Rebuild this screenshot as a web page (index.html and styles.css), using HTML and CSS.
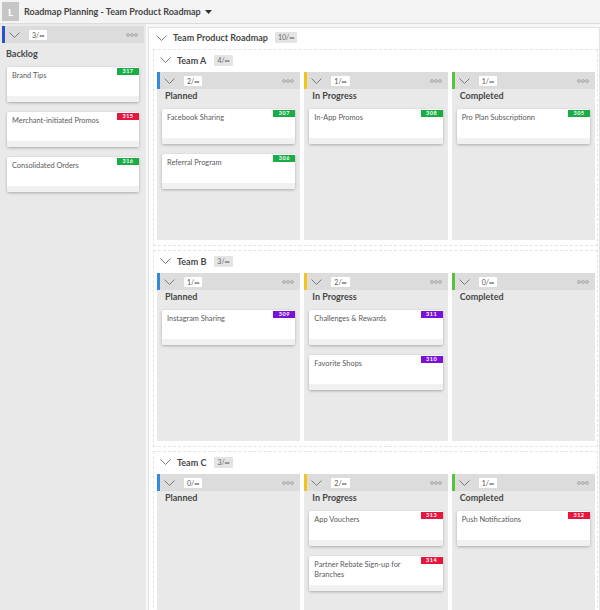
FILE: index.html
```html
<!DOCTYPE html>
<html>
<head>
<meta charset="utf-8">
<link rel="stylesheet" href="styles.css">
</head>
<body>
<header class="topbar">
  <div class="avatar">L</div>
  <div class="title">Roadmap Planning - Team Product Roadmap</div>
  <svg class="caret" width="7" height="4" viewBox="0 0 7 4"><polygon points="0,0 7,0 3.5,4" fill="#333"/></svg>
</header>
<div class="app">
  <aside class="backlog">
    <div class="colhead bar-navy">
      <svg class="chev" width="11" height="6" viewBox="0 0 11 6"><polyline points="0.5,0.5 5.5,5.5 10.5,0.5"/></svg>
      <span class="cbadge">3/∞</span>
      <svg class="dots" width="12" height="4" viewBox="0 0 12 4"><circle cx="2" cy="2" r="1.4"/><circle cx="6" cy="2" r="1.4"/><circle cx="10" cy="2" r="1.4"/></svg>
    </div>
    <div class="collabel">Backlog</div>
    <div class="cards">
      <div class="card"><div class="card-body">Brand Tips</div><div class="card-foot"></div><span class="num green">317</span></div>
      <div class="card"><div class="card-body">Merchant-initiated Promos</div><div class="card-foot"></div><span class="num red">315</span></div>
      <div class="card"><div class="card-body">Consolidated Orders</div><div class="card-foot"></div><span class="num green">316</span></div>
    </div>
  </aside>
  <main class="main">
    <section class="roadmap">
      <div class="rm-head">
        <svg class="chev" width="11" height="6" viewBox="0 0 11 6"><polyline points="0.5,0.5 5.5,5.5 10.5,0.5"/></svg>
        <span class="rm-title">Team Product Roadmap</span>
        <span class="tbadge">10/∞</span>
      </div>

      <section class="team">
        <div class="team-head">
          <svg class="chev" width="11" height="6" viewBox="0 0 11 6"><polyline points="0.5,0.5 5.5,5.5 10.5,0.5"/></svg>
          <span class="team-title">Team A</span>
          <span class="tbadge">4/∞</span>
        </div>
        <div class="cols">
          <div class="col">
            <div class="colhead bar-blue">
              <svg class="chev" width="11" height="6" viewBox="0 0 11 6"><polyline points="0.5,0.5 5.5,5.5 10.5,0.5"/></svg>
              <span class="cbadge">2/∞</span>
              <svg class="dots" width="12" height="4" viewBox="0 0 12 4"><circle cx="2" cy="2" r="1.4"/><circle cx="6" cy="2" r="1.4"/><circle cx="10" cy="2" r="1.4"/></svg>
            </div>
            <div class="collabel">Planned</div>
            <div class="cards">
              <div class="card"><div class="card-body">Facebook Sharing</div><div class="card-foot"></div><span class="num green">307</span></div>
              <div class="card"><div class="card-body">Referral Program</div><div class="card-foot"></div><span class="num green">306</span></div>
            </div>
          </div>
          <div class="col">
            <div class="colhead bar-yellow">
              <svg class="chev" width="11" height="6" viewBox="0 0 11 6"><polyline points="0.5,0.5 5.5,5.5 10.5,0.5"/></svg>
              <span class="cbadge">1/∞</span>
              <svg class="dots" width="12" height="4" viewBox="0 0 12 4"><circle cx="2" cy="2" r="1.4"/><circle cx="6" cy="2" r="1.4"/><circle cx="10" cy="2" r="1.4"/></svg>
            </div>
            <div class="collabel">In Progress</div>
            <div class="cards">
              <div class="card"><div class="card-body">In-App Promos</div><div class="card-foot"></div><span class="num green">308</span></div>
            </div>
          </div>
          <div class="col">
            <div class="colhead bar-green">
              <svg class="chev" width="11" height="6" viewBox="0 0 11 6"><polyline points="0.5,0.5 5.5,5.5 10.5,0.5"/></svg>
              <span class="cbadge">1/∞</span>
              <svg class="dots" width="12" height="4" viewBox="0 0 12 4"><circle cx="2" cy="2" r="1.4"/><circle cx="6" cy="2" r="1.4"/><circle cx="10" cy="2" r="1.4"/></svg>
            </div>
            <div class="collabel">Completed</div>
            <div class="cards">
              <div class="card"><div class="card-body">Pro Plan Subscriptionn</div><div class="card-foot"></div><span class="num green">305</span></div>
            </div>
          </div>
        </div>
      </section>

      <section class="team">
        <div class="team-head">
          <svg class="chev" width="11" height="6" viewBox="0 0 11 6"><polyline points="0.5,0.5 5.5,5.5 10.5,0.5"/></svg>
          <span class="team-title">Team B</span>
          <span class="tbadge">3/∞</span>
        </div>
        <div class="cols">
          <div class="col">
            <div class="colhead bar-blue">
              <svg class="chev" width="11" height="6" viewBox="0 0 11 6"><polyline points="0.5,0.5 5.5,5.5 10.5,0.5"/></svg>
              <span class="cbadge">1/∞</span>
              <svg class="dots" width="12" height="4" viewBox="0 0 12 4"><circle cx="2" cy="2" r="1.4"/><circle cx="6" cy="2" r="1.4"/><circle cx="10" cy="2" r="1.4"/></svg>
            </div>
            <div class="collabel">Planned</div>
            <div class="cards">
              <div class="card"><div class="card-body">Instagram Sharing</div><div class="card-foot"></div><span class="num purple">309</span></div>
            </div>
          </div>
          <div class="col">
            <div class="colhead bar-yellow">
              <svg class="chev" width="11" height="6" viewBox="0 0 11 6"><polyline points="0.5,0.5 5.5,5.5 10.5,0.5"/></svg>
              <span class="cbadge">2/∞</span>
              <svg class="dots" width="12" height="4" viewBox="0 0 12 4"><circle cx="2" cy="2" r="1.4"/><circle cx="6" cy="2" r="1.4"/><circle cx="10" cy="2" r="1.4"/></svg>
            </div>
            <div class="collabel">In Progress</div>
            <div class="cards">
              <div class="card"><div class="card-body">Challenges &amp; Rewards</div><div class="card-foot"></div><span class="num purple">311</span></div>
              <div class="card"><div class="card-body">Favorite Shops</div><div class="card-foot"></div><span class="num purple">310</span></div>
            </div>
          </div>
          <div class="col">
            <div class="colhead bar-green">
              <svg class="chev" width="11" height="6" viewBox="0 0 11 6"><polyline points="0.5,0.5 5.5,5.5 10.5,0.5"/></svg>
              <span class="cbadge">0/∞</span>
              <svg class="dots" width="12" height="4" viewBox="0 0 12 4"><circle cx="2" cy="2" r="1.4"/><circle cx="6" cy="2" r="1.4"/><circle cx="10" cy="2" r="1.4"/></svg>
            </div>
            <div class="collabel">Completed</div>
            <div class="cards"></div>
          </div>
        </div>
      </section>

      <section class="team">
        <div class="team-head">
          <svg class="chev" width="11" height="6" viewBox="0 0 11 6"><polyline points="0.5,0.5 5.5,5.5 10.5,0.5"/></svg>
          <span class="team-title">Team C</span>
          <span class="tbadge">3/∞</span>
        </div>
        <div class="cols">
          <div class="col">
            <div class="colhead bar-blue">
              <svg class="chev" width="11" height="6" viewBox="0 0 11 6"><polyline points="0.5,0.5 5.5,5.5 10.5,0.5"/></svg>
              <span class="cbadge">0/∞</span>
              <svg class="dots" width="12" height="4" viewBox="0 0 12 4"><circle cx="2" cy="2" r="1.4"/><circle cx="6" cy="2" r="1.4"/><circle cx="10" cy="2" r="1.4"/></svg>
            </div>
            <div class="collabel">Planned</div>
            <div class="cards"></div>
          </div>
          <div class="col">
            <div class="colhead bar-yellow">
              <svg class="chev" width="11" height="6" viewBox="0 0 11 6"><polyline points="0.5,0.5 5.5,5.5 10.5,0.5"/></svg>
              <span class="cbadge">2/∞</span>
              <svg class="dots" width="12" height="4" viewBox="0 0 12 4"><circle cx="2" cy="2" r="1.4"/><circle cx="6" cy="2" r="1.4"/><circle cx="10" cy="2" r="1.4"/></svg>
            </div>
            <div class="collabel">In Progress</div>
            <div class="cards">
              <div class="card"><div class="card-body">App Vouchers</div><div class="card-foot"></div><span class="num red">313</span></div>
              <div class="card"><div class="card-body">Partner Rebate Sign-up for Branches</div><div class="card-foot"></div><span class="num red">314</span></div>
            </div>
          </div>
          <div class="col">
            <div class="colhead bar-green">
              <svg class="chev" width="11" height="6" viewBox="0 0 11 6"><polyline points="0.5,0.5 5.5,5.5 10.5,0.5"/></svg>
              <span class="cbadge">1/∞</span>
              <svg class="dots" width="12" height="4" viewBox="0 0 12 4"><circle cx="2" cy="2" r="1.4"/><circle cx="6" cy="2" r="1.4"/><circle cx="10" cy="2" r="1.4"/></svg>
            </div>
            <div class="collabel">Completed</div>
            <div class="cards">
              <div class="card"><div class="card-body">Push Notifications</div><div class="card-foot"></div><span class="num red">312</span></div>
            </div>
          </div>
        </div>
      </section>
    </section>
  </main>
</div>
</body>
</html>
```

FILE: styles.css
```css
* { box-sizing: border-box; }
html, body { margin: 0; height: 610px; overflow: hidden; }
body {
  font-family: Lato, "Open Sans", "Liberation Sans", sans-serif;
  background: #ffffff;
  color: #444;
}

/* top bar */
.topbar {
  height: 24px;
  background: #f4f4f4;
  border-bottom: 1px solid #dcdcdc;
  display: flex;
  align-items: center;
  padding-left: 2px;
}
.avatar {
  width: 17px;
  height: 19px;
  background: #c6c6c6;
  color: #fff;
  font-size: 10px;
  font-weight: 700;
  display: flex;
  align-items: center;
  justify-content: center;
}
.title {
  margin-left: 5px;
  font-size: 9px;
  font-weight: 700;
  color: #454545;
}
.caret { margin-left: 4px; }

.app { display: flex; height: 586px; }

/* backlog panel */
.backlog {
  width: 146px;
  flex: none;
  background: #e9e9e9;
  padding: 2px 2px 0;
}

/* shared column header */
.colhead {
  height: 17px;
  background: #dcdcdc;
  border-left: 3px solid #2e86de;
  display: flex;
  align-items: center;
  padding: 0 6px 0 4px;
}
.bar-navy { border-left-color: #2752c8; }
.bar-blue { border-left-color: #2f8ae0; }
.bar-yellow { border-left-color: #f6c21c; }
.bar-green { border-left-color: #58c23b; }

.chev { display: block; flex: none; }
.chev polyline { fill: none; stroke: #7a7a7a; stroke-width: 1; }
.dots { display: block; margin-left: auto; }
.dots circle { fill: none; stroke: #9a9a9a; stroke-width: 0.8; }

.cbadge {
  margin-left: 9px;
  background: #fff;
  color: #555;
  font-size: 7px;
  line-height: 10px;
  height: 10px;
  padding: 0 3px;
  border-radius: 1px;
}

.collabel {
  font-size: 9px;
  font-weight: 700;
  line-height: 12px;
  color: #474747;
}
.backlog .collabel { padding: 5px 0 0 4px; margin-bottom: 7px; }
.backlog .cards { padding: 0 5px; }

/* cards */
.card {
  position: relative;
  background: #fff;
  border-radius: 2px;
  box-shadow: 0 1px 3px rgba(0, 0, 0, 0.28);
  margin-bottom: 10px;
}
.card-body {
  min-height: 29px;
  padding: 4px 26px 4px 5px;
  font-size: 7.4px;
  line-height: 10px;
  color: #5a5a5a;
}
.card-foot {
  height: 6px;
  background: #f1f1f2;
  border-radius: 0 0 2px 2px;
}
.num {
  position: absolute;
  top: 1px;
  right: 0;
  width: 22px;
  height: 7px;
  font-size: 5.5px;
  font-weight: 700;
  line-height: 7px;
  letter-spacing: 0.5px;
  color: #fff;
  text-align: center;
}
.green { background: #1cac45; }
.red { background: #e6173e; }
.purple { background: #7b10d7; }

/* main area */
.main {
  flex: 1;
  padding: 3px 0 0 2px;
  background: #f7f7f7;
  overflow: hidden;
}
.roadmap {
  border: 1px solid #e2e2e2;
  background: #fff;
  padding: 0 1px 0 4px;
  min-height: 100%;
}
.rm-head {
  height: 19px;
  margin-bottom: 2px;
  display: flex;
  align-items: center;
  padding-left: 3px;
}
.rm-title, .team-title {
  font-size: 9px;
  font-weight: 700;
  color: #474747;
  margin-left: 6px;
}
.tbadge {
  margin-left: 7px;
  background: #e4e4e4;
  color: #666;
  font-size: 7px;
  line-height: 11px;
  height: 11px;
  padding: 0 3px;
  border-radius: 1px;
}
.team-head .tbadge { margin-left: 8px; }

.team {
  border: 1px dashed #e3e3e3;
  padding: 0 2px 5px 3px;
  margin-bottom: 4px;
}
.team-head {
  height: 22px;
  padding: 0 0 2px 3px;
  display: flex;
  align-items: center;
}
.cols { display: flex; gap: 4px; }
.col {
  flex: 1;
  min-width: 0;
  background: #e9e9e9;
  display: flex;
  flex-direction: column;
}
.col .collabel { padding: 1px 0 0 8px; margin-bottom: 7px; }
.col .cards { padding: 0 5px 41px; flex: 1; }
```
